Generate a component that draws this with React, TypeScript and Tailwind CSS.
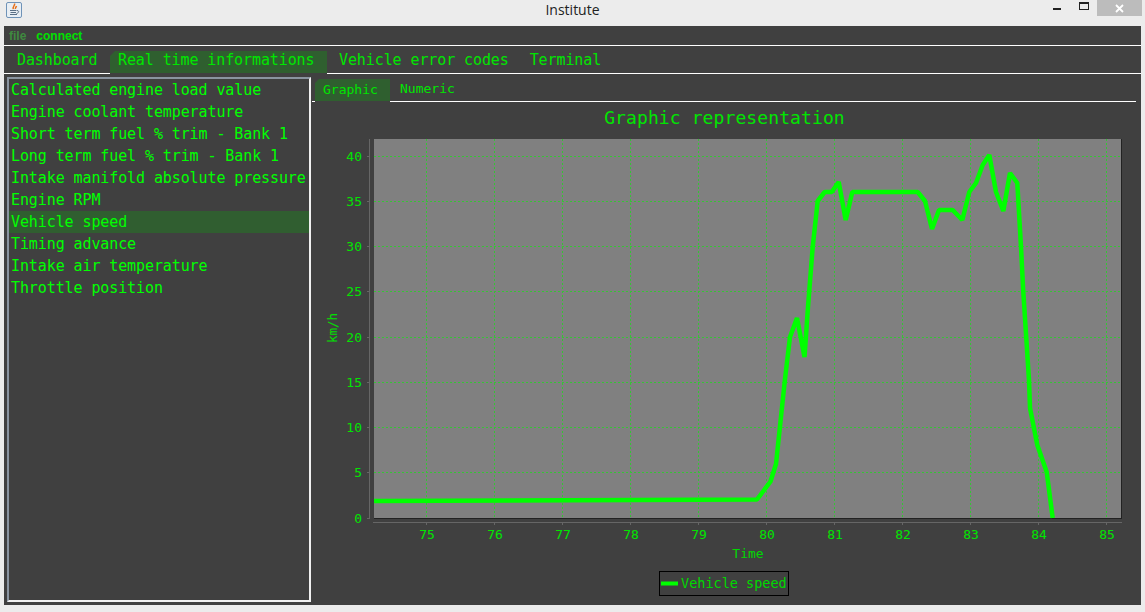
const mono = "font-['DejaVu_Sans_Mono','Liberation_Mono',monospace]";

const items = [
  "Calculated engine load value",
  "Engine coolant temperature",
  "Short term fuel % trim - Bank 1",
  "Long term fuel % trim - Bank 1",
  "Intake manifold absolute pressure",
  "Engine RPM",
  "Vehicle speed",
  "Timing advance",
  "Intake air temperature",
  "Throttle position",
];

const xTicks = [75, 76, 77, 78, 79, 80, 81, 82, 83, 84, 85];
const yTicks: [number, number][] = [
  [0, 518],
  [5, 472],
  [10, 427],
  [15, 382],
  [20, 337],
  [25, 291],
  [30, 246],
  [35, 201],
  [40, 156],
];
const tx = (v: number) => 426 + (v - 75) * 68;

const points =
  "374,501 757,499.5 770.5,481.5 776,464 785,379 790,337 797,318 804.5,357 808,307 812.7,247 817.7,201 824.7,192 831.7,192 838.7,182 845.7,220 852.3,192 917.7,192 925,201 932,229 939,210 952.7,210 962.3,220 969.3,192 976,183 982.7,165 989.3,155 996,192 1003.3,211 1010,173 1017.3,183 1021,247 1023.3,292 1029,380 1030,408 1037.3,445 1046.7,472 1052.7,518";

function Chart() {
  return (
    <svg width="824" height="503" viewBox="312 102 824 503" className="block">
      <g fontFamily="'DejaVu Sans Mono','Liberation Mono',monospace">
        <text x="724.500" y="124" textAnchor="middle" fontSize="18" letterSpacing="0.1" fill="#00e600">
          Graphic representation
        </text>
        <rect x="374" y="139" width="747" height="379" fill="#808080" />
        {xTicks.map((v) => (
          <line key={v} x1={tx(v) + 0.5} x2={tx(v) + 0.5} y1="139" y2="518" stroke="#35c435" strokeWidth="1" strokeDasharray="2 2" />
        ))}
        {yTicks.slice(1).map(([v, y]) => (
          <line key={v} x1="374" x2="1121" y1={y + 0.5} y2={y + 0.5} stroke="#35c435" strokeWidth="1" strokeDasharray="2 2" />
        ))}
        <line x1="374" x2="1122" y1="518.5" y2="518.5" stroke="#222222" />
        <line x1="1121.5" x2="1121.5" y1="139" y2="519" stroke="#222222" />
        <line x1="373" x2="1122" y1="522.5" y2="522.5" stroke="#666666" />
        <line x1="369.5" x2="369.5" y1="139" y2="519" stroke="#666666" />
        {xTicks.map((v) => (
          <g key={v}>
            <line x1={tx(v) + 0.5} x2={tx(v) + 0.5} y1="522" y2="525" stroke="#666666" />
            <text x={tx(v) + 1} y="539" textAnchor="middle" fontSize="13" fill="#00e600">
              {v}
            </text>
          </g>
        ))}
        {yTicks.map(([v, y]) => (
          <g key={v}>
            <line x1="367" x2="370" y1={y + 0.5} y2={y + 0.5} stroke="#666666" />
            <text x="362" y={y + 5} textAnchor="end" fontSize="13" fill="#00e600">
              {v}
            </text>
          </g>
        ))}
        <text transform="translate(337 328) rotate(-90)" textAnchor="middle" fontSize="12.500" fill="#00e000">
          km/h
        </text>
        <text x="748" y="558" textAnchor="middle" fontSize="13" fill="#00d800">
          Time
        </text>
        <polyline points={points} fill="none" stroke="#00ff00" strokeWidth="4.500" strokeLinejoin="bevel" />
        <rect x="659.500" y="571.500" width="129" height="24" fill="none" stroke="#000000" />
        <line x1="661" x2="678" y1="583.500" y2="583.500" stroke="#00ff00" strokeWidth="4" />
        <text x="681" y="588" fontSize="13.500" fill="#00d800">
          Vehicle speed
        </text>
      </g>
    </svg>
  );
}

function TitleBar() {
  return (
    <div className="relative h-[26px] flex items-center justify-center bg-[#ececec] font-['Open_Sans',sans-serif] text-[14px] text-[#222222]">
      <div className="absolute left-[6px] top-[2px] w-[16px] h-[16px] rounded-[2px] border border-[#6f93b8] bg-[#e8eef4]">
        <svg width="14" height="14" viewBox="0 0 14 14">
          <path d="M7.500 .5c1 2-2.500 3-1 5.500M9.500 3c-.5 1.500-1.500 2-1 3" stroke="#e8701a" strokeWidth="1.500" fill="none" />
          <path d="M3 7.500h6.500M3.500 9.500h5.500M3 11.500h7M10 7.500c2.500 0 2 2.500-.5 3" stroke="#5a6f85" strokeWidth="1" fill="none" />
        </svg>
      </div>
      <span className="-mt-[8px]">Institute</span>
      <div className="absolute left-[1053px] top-[8px] w-[8px] h-[2px] bg-[#222222]" />
      <div className="absolute left-[1079px] top-[2px] w-[10px] h-[8px] border border-[#222222] border-t-[2px]" />
      <div className="absolute left-[1097px] top-0 w-[45px] h-[16px] bg-[#bcbcbc] flex items-center justify-center">
        <svg width="9" height="9" viewBox="0 0 9 9">
          <path d="M1 1l7 7M8 1l-7 7" stroke="#ffffff" strokeWidth="1.800" />
        </svg>
      </div>
    </div>
  );
}

export default function App() {
  return (
    <div className="w-[1145px] h-[612px] bg-[#ececec] overflow-hidden">
      <TitleBar />
      <div className={`ml-[4px] w-[1137px] h-[579px] bg-[#404040] flex flex-col ${mono}`}>
        <div className="h-[20px] shrink-0 border-b border-white flex items-center gap-[10px] pl-[5px] font-['Liberation_Sans',sans-serif] font-bold text-[12px]">
          <span className="text-[#3f8a3f]">file</span>
          <span className="text-[#00e000]">connect</span>
        </div>
        <div className="h-[28px] shrink-0 flex items-stretch text-[15px] tracking-[-0.1px] text-[#00e600]">
          <div className="w-[106px] border-b border-white flex items-center pl-[13px] pt-[1px]">Dashboard</div>
          <div className="w-[217px] mt-[5px] mb-[1px] bg-[#2f5f2f] flex items-center pl-[8px] pb-[4px] [clip-path:polygon(5px_0,100%_0,100%_100%,0_100%,0_5px)]">
            Real time informations
          </div>
          <div className="flex-1 border-b border-white flex items-center gap-[21px] pl-[12px] pt-[1px]">
            <span>Vehicle error codes</span>
            <span>Terminal</span>
          </div>
        </div>
        <div className="flex-1 flex pt-[3px] pb-[4px]">
          <div className="ml-[3px] w-[304px] h-[525px] border-2 border-[#f0f0f0] border-t-[#8a94a0] border-l-[#8a94a0] text-[15px] tracking-[-0.1px] text-[#00ff00]">
            {items.map((t) => (
              <div
                key={t}
                className={`h-[22px] pl-[2px] flex items-center whitespace-nowrap ${t === "Vehicle speed" ? "bg-[#305e30]" : ""}`}
              >
                {t}
              </div>
            ))}
          </div>
          <div className="ml-[1px] w-[824px] flex flex-col">
            <div className="h-[25px] shrink-0 flex items-stretch text-[13px] text-[#00e600]">
              <div className="w-[3px] border-b border-white" />
              <div className="w-[75px] mt-[2px] mb-[1px] bg-[#2f5f2f] flex items-center pl-[8px] [clip-path:polygon(4px_0,100%_0,100%_100%,0_100%,0_4px)]">
                Graphic
              </div>
              <div className="flex-1 border-b border-white flex items-center pl-[10px]">Numeric</div>
            </div>
            <Chart />
          </div>
        </div>
      </div>
    </div>
  );
}
